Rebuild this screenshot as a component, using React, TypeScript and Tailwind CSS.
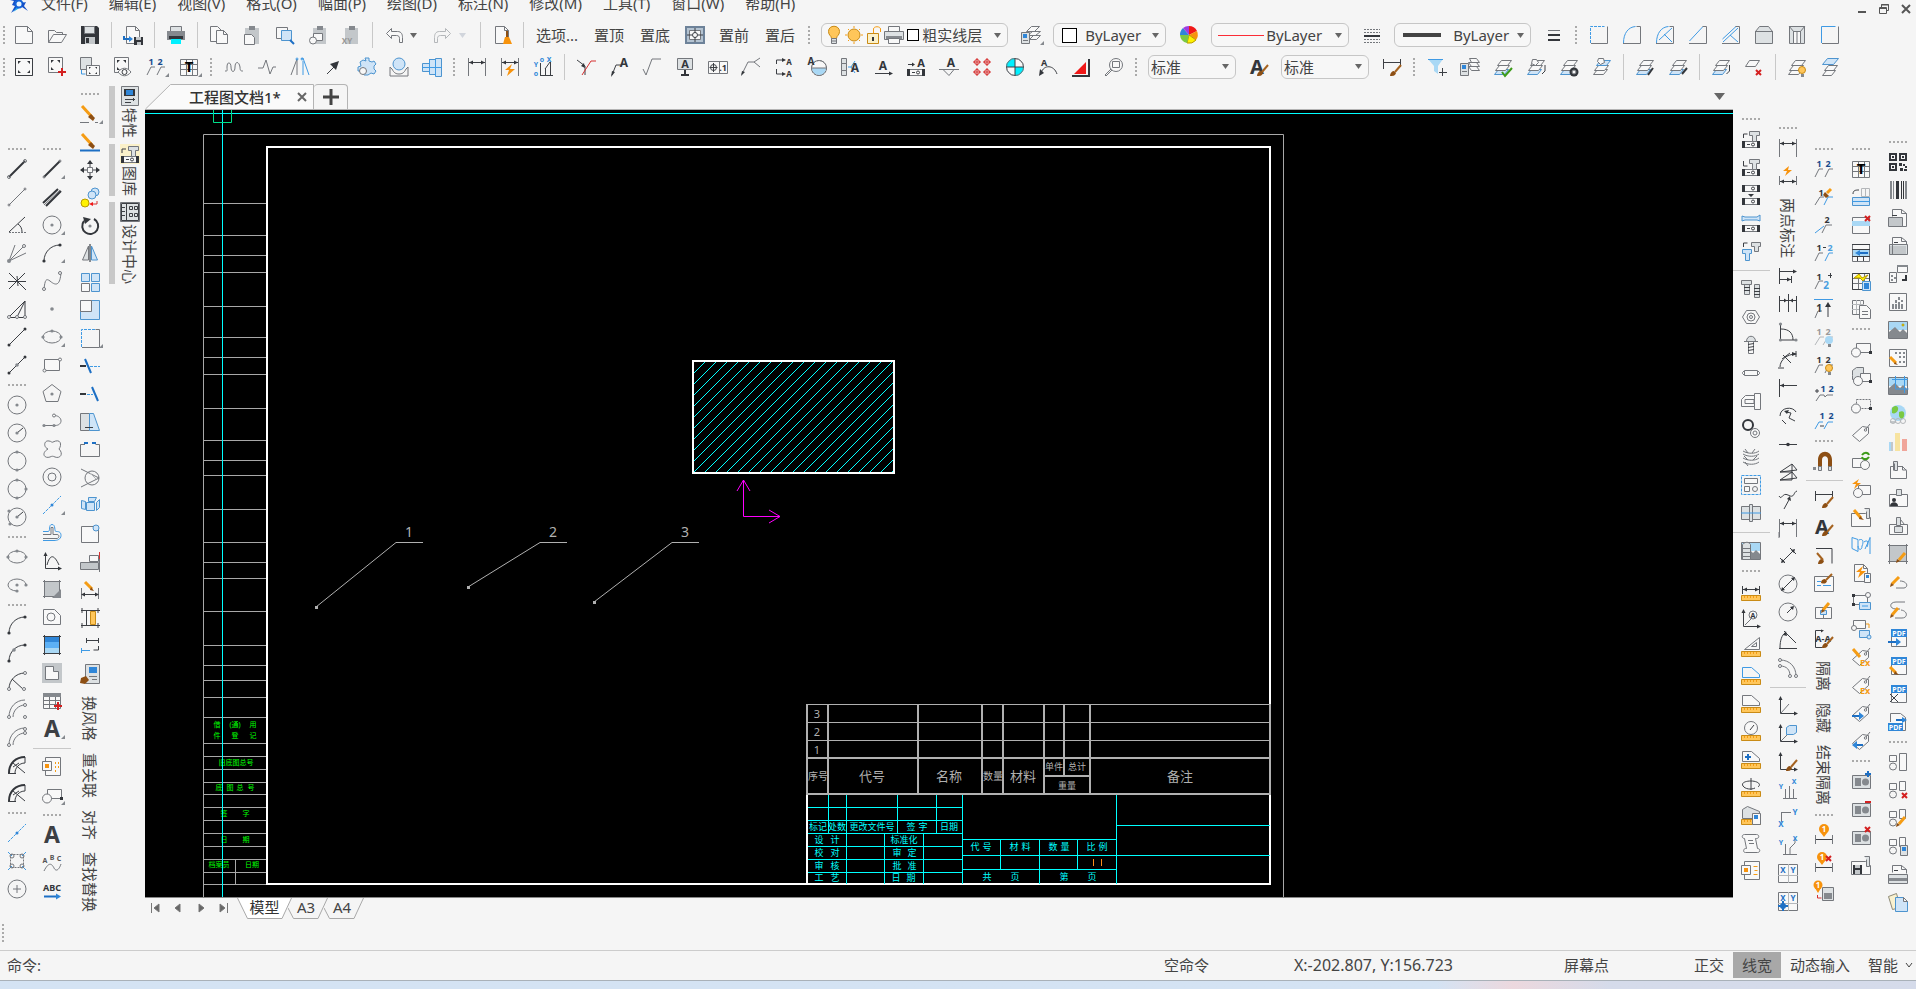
import { Fragment, type ReactNode } from 'react';
import clsx from 'clsx';

/*
 * Toolbar glyphs live on a 20x20 grid. A glyph is a list of layers split by ";":
 *   "<pen> <path data>"               a path
 *   "<pen> o<cx> <cy> <r> ..."        one or more circles
 *   "t <x> <y> <size> <color> <text>" a centred label
 */
type Pen = { stroke?: string; fill?: string; width?: number; dash?: string };

const pens: Record<string, Pen> = {
  g: { stroke: '#74777c' },
  k: { stroke: '#3c3f44' },
  K: { stroke: '#33363b', width: 2 },
  l: { stroke: '#b4b7ba' },
  b: { stroke: '#3f9ae4' },
  V: { stroke: '#1d6fc4', width: 2 },
  r: { stroke: '#d63030' },
  R: { stroke: '#d42020', width: 2 },
  o: { stroke: '#f59c14', width: 3 },
  q: { stroke: '#f59c14' },
  p: { stroke: '#a5621f', width: 2 },
  e: { stroke: '#3c9a18', width: 2 },
  x: { stroke: '#74777c', dash: '2 1' },
  y: { stroke: '#3f9ae4', dash: '3 1' },
  W: { stroke: '#74777c', fill: '#f8f8f8' },
  G: { stroke: '#74777c', fill: '#dde1e3' },
  H: { stroke: '#4d94cf', fill: '#cfe4f7' },
  M: { fill: '#85898e' },
  m: { fill: '#c3c7ca' },
  N: { fill: '#33363b' },
  U: { fill: '#2f86d8' },
  F: { fill: '#f7930d' },
  S: { fill: '#f01818' },
  Y: { stroke: '#c98b16', fill: '#ffc65a' },
  C: { fill: '#00f0ff' },
  c: { fill: '#a9d8f5' },
  P: { fill: '#8d4f14' },
  Q: { stroke: '#b99a00', fill: '#fff200' },
  A: { fill: '#7ac943' },
  v: { fill: '#a03ce0' },
  s: { fill: '#5cb0f5' },
  i: { stroke: '#6d8299', fill: '#b4c3d1', width: 2 },
  // pale fills
  f: { fill: '#f0a59a' },
  j: { fill: '#f7e3a0' },
  J: { fill: '#f9f1cf', stroke: '#8d8a78' },
  z: { fill: '#fbf1c9' },
};

const corner = 'M M23 16v4h-4z';
const sheet = 'W M3.5 1.5h9l4 4v13h-13z;g M12.5 1.5v4h4';
const dim = 'g M1.5 1v18M18.5 1v18;k M2 5.5h16;N M2 5.5l4-2v4zM18 5.5l-4-2v4z';
const brush = 'P M8 19c0-3 2-5 4-5l2 2c-1 3-3 3-6 3z;p M13 15l6-7';
const pencil = 'o M11 16l6-7;P M8 19l1-4 3 2z';
const ruler = 'Y M.5 14.5h19v5h-19z;q M3.5 15v2M6.5 15v2M9.5 15v2M12.5 15v2M15.5 15v2';
const block = 'W M5.5 4.5h14v9h-14z;W o5 13.5 4.5;N M18 12h3v3h-3z';
const tag = 'W M1.5 12.5l10-9 6 1 0 6-9 8z;g o14.5 7 1.2;g M15 6l4-5';
const pdf = 'W M3.5 1.5h15v17h-15z;U M3 1h16v8h-16z;t 11 8 7 #ffffff PDF';
const axes = 'k M2.5 2v15.5h16;N M2.5 0l2 4h-4zM20 17.5l-4 2v-4z';
const num = 'g M1 18l4-8h4M11 18l4-8h4';
const bolt = 'F M12 7l-7 6h4l-2 6 8-7h-5z';
const part = 'W M1.5 12.5h17v6h-17z;N M1 12h3v7h-3zM16 12h3v7h-3z;k o12 15.5 1.5;k M6 15.5h3';
const hammer = 'G M8.5 2.5h10v4h-3v6h-4v-6h-3z';
const screw = 'G M5.5 6.5c0-7 9-7 9 0z;W M7.5 6.5h5v12h-5z;g M3 6.5h14;k M7 9.5l6-1M7 12.5l6-1M7 15.5l6-1';
const bulb = 'Y o15 13 3.5;M M14 17h3v3h-3z';
const cells = 'W M1.5 2.5h17v16h-17z;g M1 7.5h18M1 12.5h18M7.5 2v16M13.5 2v16';
const photo = 'W M.5 1.5h19v17h-19z;c M1 2h18v8h-18z;M M1 12l6-5 5 5 3-3 4 4v5h-18z';
const card = 'W M1.5 3.5h7v6h-7zM11.5 1.5h7v17h-7z;g o5 14.5 3.5';
const cardShort = 'W M1.5 3.5h7v6h-7zM11.5 1.5h6v9h-6z;g o5 14.5 3.5';
const scene = 'G M1.5 4.5h18v13h-18z;M M4 7h6v8h-6z;M o14.5 11 3.5';
const box = 'W M2.5 6.5h12l4 4v8h-16z;g M14.5 6v4h4';
const xy = 'W M.5 .5h19v18h-19z;l M10.5 0v19M0 11.5h20;t 5 9 8 #1d6fc4 X;t 15 9 8 #1d6fc4 Y';

const layers = (top: string, mid: string, low: string) =>
  `${low} M5.5 12.5h10l-4 5h-10z;${mid} M6.5 8.5h10l-4 5h-10z;${top} M8.5 3.5h10l-4 5h-10z`;

const glyphs: Record<string, string> = {
  // standard bar
  new: 'W M1.5 1.5h12l5 5v12h-17z;g M13.5 1.5v5h5',
  open: 'g M1.5 17.5v-12h6l2 2h6v3;W M1.5 17.5l5-8h13l-5 8z',
  save: 'N M1 1h16l2 2v16h-18z;G M4.5 1.5h10v7h-10z;m M5 12h10v7h-10z;N M6 13h3v5h-3z',
  saveAs: `${sheet};V M1 11v3h6;U M6 11l4 3-4 3z;N M11 12h9v8h-9z;m M13 12h5v3h-5zM14 17h4v3h-4z`,
  print: 'G M4.5 1.5h11v6h-11z;M M1 6h18v9h-18z;N M3 11h14v3h-14z;C M5 14h10v5h-10z',
  copy: 'W M1.5 1.5h7l4 4v11h-11z;W M7.5 5.5h7l4 4v9h-11z;g M14.5 5.5v4h4',
  paste: 'm M3 3h14v16h-14z;M M7 1h6v4h-6z;W M2.5 9.5h7l3 3v7h-10z',
  pasteZoom: 'W M1.5 2.5h11v11h-11z;H M6.5 5.5h10v10h-10z;V M15 15l4 4',
  pasteBlock: 'm M5 3h13v16h-13z;M M9 1h6v4h-6z;W M5.5 8.5h9v7h-9z;W o5 15.5 3.5',
  pasteXY: 'm M4 3h13v16h-13z;M M8 1h6v4h-6z;t 6 19 8 #999999 XY',
  undo: 'W M2.5 8.5l5-5v3h6c4 0 5 3 5 6v5h-3v-4c0-2-1-3-3-3h-5v3z',
  redo: 'l M17.5 8.5l-5-5v3h-6c-4 0-5 3-5 6v5h3v-4c0-2 1-3 3-3h5v3z',
  clean: `${sheet};P M14 6h2v7h-2z;F M13 12h4l3 7h-9z`,
  front: 'i M1 2h18v16h-18z;W M4.5 5.5h11v9h-11z;k o10 10 2.5;k M10 3v5M10 12v5M2 10h5M13 10h5',
  layerMgr: `W M10.5 1.5h8l-5 5h-8zM11.5 6.5h8l-5 4h-8zM12.5 10.5h7l-4 4h-7z;G M.5 7.5h8v11h-8z;U M2 9h4v4h-4z;g M2 15.5h5;${corner}`,
  wheel: 'S M10 10L10 1A9 9 0 0 1 18 6z;F M10 10L18 6A9 9 0 0 1 17 15z;Q M10 10L17 15A9 9 0 0 1 8 18z;A M10 10L8 18A9 9 0 0 1 1 10z;U M10 10L1 10A9 9 0 0 1 4 3z;v M10 10L4 3A9 9 0 0 1 10 1z',
  linetype: 'x M2 4.5h16M2 7.5h16;K M2 11h16;x M2 14.5h16M2 17.5h16',
  lineweight: 'g M4 5.5h12;K M4 10h12;K M4 15h12',
  cnrBox: 'y M1.5 18v-16.5h14;g M2 18.5h16.5v-17',
  cnrArc: 'b M1.5 18c0-10 5-16 12-16.5;g M1 18.5h17.5v-17h-4',
  cnrArcX: 'b M1.5 18c0-10 5-16 12-16.5M4 15l13-12M9 9l8 8;g M1 18.5h17.5v-17h-4',
  chamfer: 'b M1.5 16L15 1.5;g M1 18.5h17.5v-17h-4',
  chamferX: 'b M1.5 14L15 1.5M2 17L17 3M9 10l8 7;g M1 18.5h17.5v-17h-4',
  shaft: 'G M1.5 6.5l4-5h9l4 5v12h-17z;g M1 6.5h18',
  hole: 'G M2.5 1.5h15v17h-15z;W M6.5 6.5h7v12h-7z;g M2 1l5 6M18 1l-5 6M10 7v11',
  cnrLine: 'b M1.5 18v-16.5h14;g M2 18.5h16.5v-17',

  // drawing bar
  frame: 'W M1.5 1.5h17v17h-17z;k M1.5 1.5h17v17h-17z;N M4 4h3l-3 3zM16 4v3l-3-3zM4 16v-3l3 3zM16 16h-3l3-3z',
  frameAdd: 'W M1.5 .5h14v15h-14z;N M4 3h3l-3 3zM13 3v3l-3-3zM4 13v-3l3 3z;R M15 11v8M11 15h8',
  frameSwap: 'G M.5 .5h11v12h-11z;W M6.5 8.5h13v10h-13z;N M9 10h2l-2 2zM17 10v2l-2-2zM9 17v-2l2 2zM17 17h-2l2-2z;b M1.5 13v4h4',
  frameView: 'W M1.5 .5h14v15h-14z;N M4 3h3l-3 3zM13 3v3l-3-3zM4 13v-3l3 3z;W M5 15c4-5 9-5 13 0-4 5-9 5-13 0z;k o11.5 15 2.5',
  num: `${num};t 5 8 9 #174a8c 1;t 14 8 9 #174a8c 2;${corner}`,
  tableT: `${cells};t 10 15 15 #000000 T;${corner}`,
  wave: 'g M1 14c3 0 2 0 2-4 0-6 4-5 4 0 0 6 4 6 4 0 0-6 4-6 5 0 0 4 1 4 3 4',
  zigzag: 'g M1 11h5l3-8 4 14 3-7h3',
  gable: 'g M1 18L7 2v16;b M11 2l2-1 6 17M13 4v14;b o7 2 1 12 2 1',
  arrow: 'k M4 17l8-8;N M16 4l-3 9-6-6z',
  gear: 'H M9 1h4v3l3 1 2-1 2 3-2 2v3l2 2-2 3-3-1-3 2h-4l-1-3-3-1-2 0v-4l3-1-1-4 3-2 3 1z;W o7 14 3.5',
  cam: 'H o10 7 6;g M1 10v9h18v-9l-2 2c-2 4-4 5-7 5s-5-1-7-5z',
  coupling: 'H M.5 6.5h7v-4h6v-1h6v18h-6v-2h-6v-3h-7z;b M0 10.5h20M7.5 2v15M13.5 2v17',
  dim,
  dimFast: `${dim};${bolt}`,
  coord: 'k M7.5 6v12M7 18.5h13M12.5 18v-7M17.5 18v-13M12 12l5-7;t 3 10 7 #2f86d8 Y;t 16 5 7 #2f86d8 X;t 3 19 7 #2f86d8 o;t 9 5 7 #2f86d8 o',
  leaderR: 'k M1 3l8 6M9 18V9;r M6 18l9-14h5;N M9 11l-4-2 3-3z',
  leaderA: 'k M3 18l4-10h5;N M2 20l1-6 3 1z;t 15 10 12 #33363b A',
  rough: 'g M1 12l3 6 6-16h9',
  datum: 'G M2.5 1.5h15v11h-15z;N M9 13h2v4h-2zM6 17h8v2h-8z;t 10 11 11 #33363b A',
  tol: 'W M.5 4.5h19v12h-19z;g M11.5 4v12;k o5.5 10.5 3;k M1.5 10.5h8M5.5 6v9;t 15 14 9 #33363b .1',
  weld: 'g M1 17l6-12h6l6-4M13 5l6 5;N M0 19l1-5 3 1z',
  section: 'k M2.5 7v-4h8M2.5 12v5h8;N M12 3l-4-2v4zM12 17l-4-2v4z;t 15 8 8 #33363b A;t 15 20 8 #33363b A',
  viewDir: 'W o12 11 7.500;c M5 11h14c0 4-3 7-7 7s-7-3-7-7z;g M5 11h14;x o12 11 7.500;t 4 8 10 #33363b A',
  cutView: 'G M1.5 1.5h5v5h-5zM1.5 13.5h5v5h-5zM1.5 6.5h5v7h-5z;b M8 10h3l4-6M11 10l4 6;t 15 15 12 #33363b A',
  textLine: 'k M2 16.5h15;N M20 16.5l-4-2v4z;t 10 13 12 #33363b A',
  textPart: `${part};k M2 7.5h5;N M9 7.5l-3-2v4z;t 15 10 11 #33363b A`,
  textTri: 'g M0 12.5h20M4 12.5l6 6 5-6;t 12 10 12 #33363b A',
  targets: 'r o5 5 2.5 15 5 2.5 5 15 2.5 15 15 2.5;r M5 1v8M1 5h8M15 1v8M11 5h8M5 11v8M1 15h8M15 11v8M11 15h8',
  quad: 'W o10 10 8.500;C M10 10V1A9 9 0 0 0 1 10zM10 10v9a9 9 0 0 0 9-9z;g o10 10 8.500;k M10 1v18M1 10h18',
  textArc: 'k M3 16c3-9 13-8 16 1;N M1 19l1-7 4 4z;t 6 9 9 #33363b A',
  slope: 'S M3 17L15 5v12z;K M1 19h17V2',
  zoom: 'W o12 8 6.5;W M8.5 4.5h7v6h-7z;g M7 12l-6 6 1 1 6-6',
  styleA: `t 8 17 20 #33363b A;${brush}`,
  dimBrush: `k M1.5 2v10M18.5 2v8M2 5.5h16;${brush}`,
  filter: 'c M1 2h15l-5 7v8l-4-3V9z;b M1 2.5h15;k M15.5 11v8M12 15.5h8',
  layProp: 'W M9.5 1.5h7l3 4h-8zM8.5 5.5h8l3 4h-8zM8.5 9.5h8l3 4h-8z;G M.5 6.5h8v12h-8z;U M2 8h4v4h-4z;g M2 14.5h5',
  layOk: `${layers('W', 'W', 'H')};e M9 15l3 4 7-8`,
  layPick: `${layers('W', 'W', 'H')};W M6.5 2.5h4l2 3-3 3-4-2z;k M19 8v6l-3 3`,
  layGear: `${layers('W', 'W', 'H')};N o15 15 4.5;W o15 15 2`,
  layTop: `${layers('H', 'W', 'W')};W M6.5 1.5h5l1 4-4 2-3-3z`,
  layDown: `${layers('W', 'W', 'H')};K M18 11l-5 7`,
  layUp: `${layers('W', 'W', 'H')};K M14 17l5-6`,
  layMove: `${layers('W', 'W', 'H')};k M18.5 8v6l-3 3`,
  layDel: 'W M5.5 3.5h10l-4 6h-10z;R M12 13l5 5M17 13l-5 5',
  layBulb: `${layers('W', 'W', 'W')};${bulb}`,
  laySplit: 'H M7.5 1.5h11l-5 6h-11z;W M8.5 8.5h9l-4 5h-9zM6.500 13.5h9l-4 5h-9z',

  // lines and circles
  ln: 'K M2 18L18 2;g o2 18 1.5 18 2 1.5',
  lnThin: 'g M2 18L18 2;g o2 18 1 18 2 1',
  lnAng: 'k M2 17L18 2;x M2 17.5h17;k M11 9c3 2 4 5 4 8',
  lnFan: 'g M2 18L8 2M2 18L17 3M2 18l17-8;W o17 3 1.5;M o2 18 2',
  lnCross: 'k M2 2l17 17M2 18L18 2M1 10.5h18M10 5l1 10',
  lnTri: 'k M1 18.5h18M2 18L18 2v16M10 18l8-16;W o2 18 1.5 10 18 1.5 18 18 1.5',
  lnEnd: 'k M2 18L18 2;N o2 18 1.5 18 2 1.5',
  lnMid: 'k M2 18L18 2;N o2 18 1.5 18 2 1.5;M o10 10 1.8',
  cCtr: 'g o10 10 9;M o10 10 1.6',
  cRad: 'g o10 10 9;k M10 10l6-5;M o10 10 1.6',
  c2p: 'g o10 10 9;M o10 1 1.6 10 19 1.6',
  c3p: 'g o10 10 9;M o10 1 1.6 10 19 1.6 19 10 1.6',
  cTan: 'g o10 10 9;k M10 10l6-5;M o10 10 1.6 2 4 1.6 3 17 1.6',
  elli: 'g M1 10a9 6 0 0 1 18 0a9 6 0 0 1-18 0z;M o10 4 1.6 19 10 1.6 1 10 1.6',
  elliArc: 'g M10 16a9 6 0 1 1 9-6;M o10 10 1.6 19 10 1.6 10 16 1.6',
  arc1: 'k M2 18C2 9 9 2 18 2;N o2 18 1.6 18 2 1.6',
  arc2: 'k M2 18C2 9 9 2 18 2;N o2 18 1.6 18 2 1.6;M o7 7 1.8',
  arc3: 'k M2 18C2 9 9 2 18 2M5 8l12 11;W o2 18 1.5 18 2 1.5 17 18 1.5',
  arc4: 'g M2 18C2 8 9 1 18 1M6 18c0-7 6-12 12-12;W o2 18 1.5 18 6 1.5 18 18 1.5',
  arc5: 'g M2 18C2 8 9 1 18 1M6 18c0-7 6-12 12-12;W o2 18 1.5 18 6 1.5 18 2 1.5',
  arc6: 'K M2 18C2 8 9 2 18 2;k M8 18c0-5 4-10 10-10M1 18.5h8M6 8l12 10M18 2v6M6 12l6-4',
  center: 'y M1 19L19 1;U o10 10 1.5',
  nodes: 'x M3.5 3.5h13v13h-13z;b M1 1l4 4M19 1l-4 4M1 19l4-4M19 19l-4-4;g o5 5 2 15 5 2 5 15 2 15 15 2',
  plusC: 'g o10 10 9;g M6 10h8M10 6v8',

  // draw
  line: `K M2 18L18 2;g o2 18 1 18 2 1;${corner}`,
  dbl: 'K M1 16L16 2M4 19L19 4;g M2 18L18 3',
  circle: `g o10 10 9;M o10 10 1.6;${corner}`,
  arc: `k M2 18C2 9 9 2 18 2;N o2 18 1.6 18 2 1.6;${corner}`,
  spline: 'g M2 18c1-9 2-11 6-8 7 6 10 3 11-8;W o2 18 1.5 18 2 1.5',
  point: 'M o10 10 1.8',
  ellipse: `g M1 10a9 6 0 0 1 18 0a9 6 0 0 1-18 0z;M o10 4 1.6 19 10 1.6 1 10 1.6;${corner}`,
  rect: 'W M2.5 4.5h15v11h-15z;W o2.5 15.5 1.5 18 4.5 1.5',
  penta: 'g M10 1.5l9 7-3 10h-12l-3-10z;M o10 11 1.6',
  pline: 'g M2 14.5h11c8 0 8-9 0-10;M o2 14.5 1.6 12 14.5 1.6;W o12 4.5 1.5',
  cloud: 'g M6 10C1 8 2 1 7 2c2 0 3 2 4 1 8-4 9 3 6 7 5 5 1 10-4 8-2-1-3-1-5 0-6 2-9-4-2-8z',
  donut: 'g o10 10 9;g o10 10 4',
  axis: `y M1 19L19 1;U o10 10 1.5;${corner}`,
  contour: 'b M1 8.5h5c3 0 0-7 4-7s2 7 4 7 5 0 5 4-4 5-7 5h-11;g M1 11.5h8v-7h2v7h4c3 0 2 4 0 4H1',
  curve: 'k M3.5 2v15.5h15M5 14c3-11 7-11 12 0;N M3.5 1l2 4h-4zM20 17.5l-4 2v-4z',
  hatch: 'm M2 2h16v16h-16z;g M1 2.5h18M1 17.5h18M2.5 1v18M17.5 1v18;M M19 10v9h-9z',
  region: 'W M1.5 2.5h11l6 6v9h-17z;g o9 10 4',
  grad: 'U M2 2h16v5h-16z;s M2 7h16v6h-16z;c M2 13h16v5h-16z;k M1 1.5h18M1 18.5h18M2.5 0v20M17.5 0v20',
  lshape: 'm M0 0h20v20h-20z;W M3.5 3.5h8v5h5v8h-13z',
  table: 'W M1.5 2.5h17v15h-17z;M M1 2h18v4h-18z;g M1 9.5h18M1 13.5h18M7.5 6v11M13.5 6v11;R M16 11v8M12 15h8',
  text: `t 10 18 23 #3c3f44 A;${corner}`,
  insPic: 'W M3.5 .5h15v18h-15z;W M.5 4.5h9v9h-9z;F M3 7h4v4h-4z;q M13.5 5v2M13.5 9v2M13.5 13v2M16.5 5v2M16.5 9v2',
  blockIns: `${block};${corner}`,
  textA: 't 10 18 23 #3c3f44 A',
  abcArc: 't 3 10 7 #555555 A;t 10 7 7 #555555 B;t 17 8 7 #555555 C;g M2 18c5-10 8-7 10-3s5 2 7-4',
  abcLine: 't 10 10 9 #33363b ABC;V M2 15.5h14;U M19 15.5l-5-3v6z',

  // modify
  erase: `g M0 18.5h9M15 18.5h3;o M2 2l10 11;P M11 10l4 4-2 3-5-4z;${corner}`,
  eraseAll: 'V M0 18.5h20;o M2 2l10 11;P M11 10l4 4-2 3-5-4z',
  move: 'k M10 1v18M1 10h18;N M10 0l3 4h-6zM10 20l3-4h-6zM0 10l4-3v6zM20 10l-4-3v6z;W M7.5 7.5h5v5h-5z',
  copyObj: 'H o15 4 4;H o12 7 4;Q o5 15 4;r M11 16h6v-3;S M9 16l4-2v4z',
  rotate: 'K M4 5a8 8 0 1 0 10-2;N M3 1l8 2-6 5z;M o10 10 1.6',
  mirror: 'G M8.5 2v14h-6z;M M9 0h2v18h-2z;H M11.5 2v14h6z',
  array: 'H M1.5 1.5h8v8h-8zM11.5 1.5h8v8h-8zM11.5 11.5h8v8h-8z;W M1.5 11.5h8v8h-8z',
  scale: 'H M.5 .5h19v19h-19z;W M.5 .5h11v11h-11z',
  stretch: `y M1.5 19v-17.5h14;g M2 19.5h17.5v-18h-4;${corner}`,
  trim: 'K M0 10h6;y M10 10.5h10;V M5 3l6 14',
  extend: 'K M0 10h6;y M7 10.5h6;V M12 3l6 14',
  draft: 'G M.5 1.5h9v17h-9z;H M9.5 1.5h4l6 17h-10z;k M5 15.5h8',
  break: 'g M5 4.5h-4.5v12h19v-12h-4;V M4 3h4M12 3h4',
  cone: 'g o12 10 7;g M1 1l18 9-18 9;l M9 4l7 7',
  explode: 'H M6.5 6.5h8v8h-8zM1.5 4.5l4 1v8l-4-1zM8.5 1.5h8l-2 4h-6zM16.5 6.5l3-3v8l-3 3z',
  node: 'W M1.5 2.5h17v16h-17z;H o16 4 3',
  align: 'm M1 11h17v7h-17z;g M.5 10.5h18v7h-18z;W M9.5 3.5h9v6h-9z;r M19.5 0v7;g M19.5 7v13',
  dimEdit: 'g M1.5 8v11M18.5 8v11;k M2 14.5h16;N M1 14.5l4-2v4zM19 14.5l-4-2v4z;o M5 2l7 7;P M11 7l3 4-4-1z',
  dimRuler: 'k M1 2.5h19M1 17.5h19M6.5 3v14;Y M10.5 3.5h5v13h-5z;k M2 0v5M18 0v5M2 15v5M18 15v5',
  dimBreak: 'k M7 4.5h12M6.5 2v5M18.5 2v5M18.5 10v4h-5;b M1 14.5h9M1.5 12v5',
  propBrush: 'G M5.5 .5h14v19h-14z;U M9 3h8v6h-8z;g M9 12.5h8M12 15.5h5;P M1 14l5-2 3 4-4 4-5-1z',

  // library
  part1: `${part};${hammer};k M2.5 9v-4h4`,
  part2: `${part};${hammer};k M2.5 4v5h4`,
  part3: 'W M1.5 .5h17v6h-17z;k o12 3.5 1.5;N M1 0h3v7h-3zM16 0h3v7h-3z;W M1.5 13.5h17v6h-17z;k o12 16.5 1.5;N M1 13h3v7h-3zM16 13h3v7h-3zM10 12l-3-3h6z',
  part4: `${part};H M1 3l3 1h12l3-2v6l-3-1h-12l-3 1z`,
  part5: 'G M10.5 1.5h9v4h-2v5h-4v-5h-3z;H M1.5 8.5h9v4h-2v7h-4v-7h-3z;k M2.5 6v-4h4',
  bolts: 'G M.5 1.5h10v4h-10zM3.5 5.5h5v10h-5zM13.5 5.5h5v13h-5z;k M3 8.5h6M3 11.5h6M13 9.5h6M13 12.5h6M13 15.5h6',
  nut: 'W M5.500 3.500h9l4 6.500-4 6.500h-9l-4-6.500z;g o10 10 4 10 10 1.5',
  screw,
  pin: 'W M3.5 7.5h13l2 2v1l-2 2h-13l-2-2v-1z;g M3.5 8v4M16.5 8v4',
  bushing: 'W M13.5 2.5h6v16h-6z;W M.5 8.5l4-4h9v11h-13z;g M4 8.5h9v4h-9z',
  rings: 'K o7 6 5;W o14 14 4.5;g o14 14 2',
  spring: 'g M2 4c5 3 12 3 16 0M2 7c5 3 12 3 16 0M2 11c5 3 12 3 16 0M2 15c5 3 12 3 16 0M4 2l3 4M14 2l-3 4M3 9l4 4M16 9l-4 4M4 15l3 4',
  structure: 'y M.5 .5h19v19h-19z;W M3.5 3.5h13v5h-13zM3.5 11.5h5v5h-5z;g o14 14 2.5',
  tube: 'G M.5 3.5h8v13h-8zM8.5 1.5h3v17h-3zM11.5 3.5h8v13h-8z;b M0 10h20',
  mural: `${photo};G M1.5 3.5c3-3 6-3 8 0v15h-8z;g M1 7.5h9M1 11.5h9M1 15.5h9`,
  mDist: `k M1.5 5v8M18.5 5v8M2 8.5h16;N M2 8.5l4-2v4zM18 8.5l-4-2v4z;${ruler}`,
  mCoord: `${axes};g M4 16l8-8;W o12 6 4;t 12 9 7 #33363b A`,
  mTri: `${ruler};W M3.5 12.5l15-12v12z;g M10.5 9.5l5-4v4z`,
  mArea: `${ruler};b M1.5 12.5v-10h9l8 7v3z`,
  mPoly: `${ruler};W M1.5 12.5v-10h9l8 7v3z`,
  mCircle: `${ruler};W o10 7 6.5;k M9 9l4-5`,
  mAdd: `${ruler};W M1.5 12.5v-10h9l8 7v3z;V M7 5v6M4 8h6`,
  mLoop: `${ruler};k M10 1v12M17 10c4-3-1-6-7-6s-10 2-8 5 8 4 12 2`,
  mSheet: `${ruler};G M1.5 13.5v-9l5-3 12 5v7z;W M11.5 8.5h8v11h-8z;U M13 10h4v4h-4z`,
  scroll: 'W M3.5 1.5h12c3 0 3 4 0 4h-1l2 10c3 0 3 4 0 4h-12c-3 0-2-4 0-4h1l-2-10c-3 0-3-4 0-4z;g M7 7.5h5M8 10.5h5',
  report: 'W M3.5 .5h15v18h-15z;W M.5 4.5h9v9h-9z;F M3 7h4v4h-4z;q M12.5 5.5h4M13.5 9.5h3M12.5 13.5h4',

  // dimension
  dimAuto: 'g M1.5 10v9M18.5 10v9;k M2 15.5h16;N M2 15.5l4-2v4zM18 15.5l-4-2v4z;F M11 0l-6 5h4l-2 5 7-6h-4z',
  dimBase: 'k M1.5 2v16M2 5.5h16M2 13.5h11M13.5 10v7;N M19 5.5l-4-2v4zM13 13.5l-4-2v4z',
  dimCont: 'k M1.5 2v16M18.5 2v16M10.5 0v18M2 6.5h16;N M9 6.5l-3-2v4zM12 6.5l3-2v4z',
  dimAngle: 'k M2.5 2v16h16M3 7c8 0 12 4 12 11;M o2.5 2 1.6 2.5 18 1.6 18 18 1.6',
  dimArc: 'k M2 17c0-7 7-13 16-13M5 5l8 8M4 9l8-6M18 1v6M0 18h6;N M19 4l-5-2v4z',
  dimOrd: 'k M1.5 1v18M2 7.5h17;N M2 7.5l4-2v4z',
  dimJog: 'k M2 10c0-9 13-10 16-4M17 15l-6-3 2-5-5-1M4 14l4 4;N M6 5l5-1-2 4z',
  dimDot: 'k M1 10.5h18;N o10 10.5 1.8',
  dimTaper: 'k M2 10L14 2v8zM2 18l12-8v8zM2 10l17-2-5-6M2 18l17-2-5-6',
  dimSpline: 'k M1 6c3 5 3-4 9-1 7 4 5-3 9-4M12 8L6 19;N M12 6l1 5-4-2z',
  dimLin: `${dim};g M1 14v6`,
  dimAli: 'k M5 15L15 5M2 12l5 5M12 2l6 6;N M3 17l1-4 3 3zM17 3l-4 1 3 3z',
  dimDia: 'g o10 10 9;k M5 15L15 5;N M3 17l1-4 3 3zM17 3l-4 1 3 3z',
  dimRad: 'g o10 10 9;k M9 11l6-6;N M16 4l-4 1 3 3z',
  dimAng2: 'k M1 18.5h18M6 1l12 12M2 18C2 10 4 5 7 3;N M8 1l-3 4 4 1z',
  dimArc2: 'g M2 2C12 2 18 9 18 18M2 8c7 0 10 4 10 10;W o2 2 1.5 18 18 1.5 2 8 1.5 12 18 1.5',
  axOrigin: `${axes};g M3 17l8-9`,
  axCube: `${axes};g M3 17l6-6;H M8.5 3.5l3-2h7v7l-3 2h-7z`,
  axPencil: `${axes};${brush}`,
  ordX: 'g M5 18.5h14M7.5 9v9M11.5 6v12M15.5 9v9;t 3 9 7 #2f86d8 Y;t 16 4 7 #2f86d8 X',
  ordY: 'g M3.5 4v10M3 4.5h10;t 3 19 8 #2f86d8 X;t 17 7 8 #2f86d8 Y',
  ordXY: 'g M5 18.5h14M7.5 8v10M12 18V12l5-5V2;t 3 9 7 #2f86d8 Y;t 17 5 7 #2f86d8 X',
  xy,
  xyTarget: `${xy};V o5 14 2;V M5 9v10M0 14h10`,

  // numbering
  bal12: `${num};t 5 8 9 #174a8c 1;t 14 8 9 #174a8c 2`,
  balErase: 'g M1 18l5-8h4;b M10 18l4-8h5;t 7 9 9 #33363b 1;o M13 6l4-4;P M11 5l4 4-3 2-3-3z',
  bal2: 'b M1 18l9-7;g M8 18l4-8h6;t 13 8 9 #33363b 2',
  balSwap: 'g M1 18l4-8h4;b M11 18l4-8h4;t 5 8 9 #33363b 1;t 16 8 9 #4aa0e0 2;k M9 4.5h3',
  balAdd: 'g M1 18l4-8h4;t 5 9 9 #33363b 1;t 12 18 10 #4aa0e0 2;k M14 4.5h4M16.5 2v5',
  balUp: 'b M0 .5h19;g M1 19l3-7h4;t 5 13 10 #33363b 1;k M14 6v12;N M14 3l3 5h-6z',
  balOff: 'l M1 18l5-8h4M9 18l5-8h5;t 5 8 9 #999999 1;t 14 8 9 #999999 2;c o15 13 4;M M14 17h3v3h-3z',
  balOn: `${num};t 5 8 9 #33363b 1;t 14 8 9 #33363b 2;${bulb}`,
  balPlus: 'k M1 8h4M3 6v4;g M2 18l4-6h4l1 2 2-2h6;t 9 9 9 #174a8c 1;t 17 9 9 #174a8c 2',
  balLink: 'b M1 18l4-7h4M10 18l4-7h5;k M6 15h4;t 8 8 9 #174a8c 1;t 17 8 9 #174a8c 2',
  magnet: 'P M4 16v-7c0-11 14-11 14 0v7h-4v-7c0-5-6-5-6 0v7z;G M4.5 15.5h3v4h-3zM14.5 15.5h3v4h-3z;M M-1 16h3v3h-3z',
  leadBrush: 'k M2 3.5h16v15;P M4 19c0-3 2-5 4-5l2 2c-1 3-3 3-6 3z;p M9 15l-6-7',
  tblBrush: 'W M.5 3.5h19v15h-19z;b M3 8.5h4M3 12.5h4M9 12.5h8;P M7 10c0-3 2-4 4-4l2 2c-1 3-3 3-6 2z;p M12 7l6-6',
  bookEdit: 'W M1.5 6.5h8v11h-8zM9.5 6.5h8v11h-8z;H M6.5 9.5h6v4h-6z;o M9 9l6-7;P M7 12l1-4 3 2z',
  aaBrush: `k M8 1.5H1.5v17h7;N M10 1.5l-3-1v3z;t 9 13 9 #33363b A-A;${brush}`,
  pinDim: 'g M1.5 10v9M18.5 10v9;k M2 14.5h16;F o10 4 5;F M7 8h6l-3 4z;t 10 7 8 #ffffff 1',
  pinDimX: 'g M1.5 10v9M18.5 10v9;k M2 14.5h16;F o8 4 5;F M5 8h6l-3 4z;t 8 7 8 #ffffff 1;R M12 3l5 5M17 3l-5 5',
  pinCalc: 'G M8.5 6.5h11v13h-11z;M M10 12h8v6h-8z;F o4 4 4.5;F M1 7h6l-3 5z;t 4 7 8 #ffffff 1;r M3.5 14v3h4',

  // tables and blocks
  tText: `${cells};t 10 15 15 #000000 T`,
  tRow: 'l M10.5 1.5h8v8h-8zM14.5 1v8;k M2 7c0-4 3-4 6-4;H M1.5 10.5h17v8h-17z;b M1 14.5h18',
  tDel: 'W M1.5 2.5h17v16h-17z;c M1 6h18v5h-18z;R M14 1l5 5M19 1l-5 5',
  tMerge: 'W M1.5 1.5h17v17h-17z;k M1 1.5h18M1 6.5h18M1 13.5h18M6.5 13v5M12.5 13v5;c M2 7h16v6h-16z;V M17 10h-9;U M4 10l5-3v6z',
  tCalc: `${cells};k M1.5 2.5h17v16h-17z;Q M3 7l5-4 3 4 6-3-5 6-3-3z;H M11.5 10.5h8v9h-8z;U M13 12h5v6h-5z`,
  tSheet: 'W M1.5 1.5h11v14h-11z;l M5.5 1v14M9.5 1v14M1 5.5h12M1 10.5h12;W M8.5 6.5h7l4 4v9h-11z;g M11 12.5h6M11 15.5h6',
  blk: block,
  blkCopy: 'G M1.5 8.5v-5l4-3h7v12h-11z;W M9.5 6.5h10v8h-10z;W o7 14 4.5;N M18 13h3v3h-3z',
  blkDash: 'x M5.5 4.5h14v9h-14z;W o5 13.5 4.5;N M18 12h3v3h-3z',
  tag,
  blkSync: 'W M1.5 7.5h14v9h-14z;W o14 14 4.5;e M11 4c2-3 6-3 7 0M18 6c-2 3-6 3-7 0',
  blkFast: 'W M7.5 6.5h12v9h-12z;W o7 14 4.5;F M8 0L1 5h4l-2 5 7-6h-4z',
  blkClip: 'W M.5 6.5h14l5 4v9h-19z;G M13.5 1.5h5v10h-3v-7;o M3 3l7 8;P M9 9l4 4-5-1z',
  wrap: 'b M1 2.5l6 2v12l-6-3zM8 5c4-2 5 2 3 6 0 5-4 4-4 0M13 7c4-3 5 1 3 5M19 2v17M14 14l5-11',
  sheetFast: `${sheet};F M12 3l-7 6h4l-2 6 8-7h-5z;W M13.5 10.5h6v9h-6z;U M15 12h3v3h-3z`,
  attrIns: 'W M2.5 4.5h14v9h-14z;W o17 4 2.5;N M1 3h3v3h-3zM1 12h3v3h-3z;H M8.5 11.5h11v7h-11z;b M11 15h6',
  attrMove: 'W M2.5 1.5h12v8h-12z;W o3 9 2.5;H M8.5 11.5h10v7h-10z;H o18 18 2;q M15 5h3v4',
  tagEdit: `${tag};o M2 2l7 8;t 14 19 9 #f59c14 Ex`,
  tagEx: `${tag};t 14 19 9 #f59c14 Ex`,
  tagOut: `${tag};V M1 13h8;U M13 13l-5-4v8z`,
  tagIn: `${tag};V M12 14h-7;U M1 14l5-4v8z`,
  scAdd: `${scene};V M17 0v6M14 3h6`,
  scSub: `${scene};R M14 3h6`,
  scDel: `${scene};R M14 0l5 5M19 0l-5 5`,
  scSave: 'W M.5 6.5h14l5 4v9h-19z;G M13.5 1.5h5v10h-3v-7;N M2 10h9v9h-9z;m M4 10h5v3h-5zM4 15h5v4h-5z',

  // files and pictures
  qr: 'K M2 2h6v6h-6zM12 2h6v6h-6zM2 12h6v6h-6z;N M4 4h2v2h-2zM14 4h2v2h-2zM4 14h2v2h-2zM11 11h3v3h-3zM15 12h2v2h-2zM17 14h2v2h-2zM12 16h3v3h-3zM16 17h3v2h-3z',
  barcode: 'M M2 1h2v18h-2zM5 1h1v18h-1zM17 1h2v18h-2z;N M8 1h3v18h-3zM13 1h1v18h-1zM15 1h1v18h-1z',
  fileIn: 'W M4.5 8.5v-7h9l5 4v13h-5;g M13.5 1.5v4h5;G M.5 9.5h14v9h-14z;m M1 10h13v8h-13z;k M4 7.5h5',
  fileIn2: 'W M4.5 8.5v-7h9l5 4v4;g M13.5 1.5v4h5;G M1.5 8.5h18v10h-18z;m M2 10h16v8h-16z;k M6 6.5h4;g M4.5 8v11',
  relate: 'W M9.5 1.5h10v7h-10z;M M9 1h11v2h-11z;W M1.5 8.5h7v10h-7z;M M3 11h2v2h-2zM3 15h2v2h-2zM6 13h2v2h-2z;K M18 11v5h-4',
  dots: 'W M1.5 1.5h17v17h-17z;M M4 12h2v5h-2zM7 8h2v3h-2zM7 12h2v5h-2zM10 5h2v3h-2zM10 10h2v7h-2zM13 12h2v5h-2zM13 8h2v2h-2z',
  photo: `${photo};Q o15 5 1`,
  dotsEdit: 'W M1.5 1.5h17v17h-17z;M M7 4h2v2h-2zM11 4h2v2h-2zM15 4h2v2h-2zM11 8h2v2h-2zM15 8h2v2h-2zM11 13h2v2h-2zM15 13h2v2h-2z;o M2 9l6 6;P M7 14l3 3-4-1z',
  photoClip: `${photo};b M7.5 0v13h13M16.5 0v17M4 3.5h16`,
  globe: 'c o10 9 8;A M4 4c4-4 7-1 6 2s-4 4-6 3zM11 8c4-2 6 0 5 4s-4 3-5 0z;m M2 17h6v2h-6z;l o5 17 2.5 10 17 2.5 15 17 2.5',
  chart: 'm M1 10h4v9h-4z;c M1 10h2v9h-2z;j M7 1h5v18h-5z;f M14 7h5v12h-5z',
  clipBox: `${box};G M5.5 10.5v-9h4v9h-3v-7`,
  badge: 'W M1.5 6.5h18v12h-18z;G M8.5 1.5h5v6h-5z;N o6 12 2;N M2 18c0-5 8-5 8 0z',
  clipCard: 'W M1.5 8.5h18v10h-18z;G M6.5 10.5h8v6h-8z;G M8.5 1.5h4v8h-4z;g M12.5 3.5l4 5',
  hatchEdit: `m M2 2h16v15h-16z;g M0 1.5h20M0 17.5h20M1.5 0v20M18.5 0v20;${pencil}`,
  eraseArc: 'g M8 16h8c5-1 3-7-4-7;o M4 12l7-7;P M2 15l1-4 3 2z',
  curveEdit: 'g M17 2H8c-7 0-7 7 0 7h4M7 18h7c6 0 6-7-1-8;o M4 15l6-7;P M2 18l1-4 3 2z',
  pdfIn: `${pdf};V M0 14h9;U M13 14l-5-4v8z`,
  pdfEdit: `${pdf};o M2 11l6 6;P M7 15l4 4-5-1z`,
  pdfCut: `${pdf};k M2 10l8 8M10 10l-8 8`,
  pdfOut: 'W M2.5 10v-8.5h10l5 4v13h-3;V M8 8h7;U M19 8l-5-3v6z;U M0 11h15v8h-15z;t 7.5 18 7 #ffffff PDF',
  card,
  cardDel: `${cardShort};R M14 13l5 5M19 13l-5 5`,
  cardEdit: `${cardShort};${pencil}`,
  cardProp: `${cardShort};G M12.5 9.5h7v10h-7z;U M14 11h4v4h-4z`,
  printFile: 'W M4.5 8.5v-7h9l5 4v4;g M13.5 1.5v4h5;G M.5 10.5h19v9h-19z;M M1 14h18v3h-18z;k M6 6.5h4',
  sheets: 'J M.5 4.5l8-3 4 14-8 2z;H M7.5 5.5h8l4 4v10h-12z;W M15.5 5.5v4h4z',

  // dock tabs and object states
  dockProp: 'G M1.5 .5h17v19h-17z;N M4 3h11v7h-11z;U M6 4h7v5h-7z;k M5 13.5h10M5 16.5h6M13.5 12v3',
  dockLib: `z M0 0h20v20h-20z;${part};${hammer};k M2 9v-4h4`,
  dockCenter: 'G M.5 .5h19v19h-19z;k M1.5 1.5h17v17h-17zM6.5 1v18M9.5 4.5h3v3h-3zM14.5 4.5h3v3h-3zM9.5 11.500h3v3h-3zM14.500 11.500h3v3h-3zM2 5.5h3M2 9.5h3M2 13.5h3',
  bulb: 'Y M7.5 13.5c0-3-3-3-3-7 0-7 11-7 11 0 0 4-3 4-3 7z;G M7.5 13.5h5v5h-5z;g M7 16h6',
  sun: 'Y o10 10 6;q M10 1v2M10 17v2M1 10h2M17 10h2M4 4l1 1M15 15l1 1M4 16l1-1M15 5l1-1',
  lock: 'Y M3.5 8.5h11v10h-11z;z M4 9h10v9h-10z;N M8 12h2v4h-2z;q M9.500 8v-4c0-3 7-3 7 0v3',
  printer: 'W M4.5 1.5h11v6h-11z;G M.5 6.5h19v8h-19z;M M2 11h16v3h-16z;W M4.5 13.5h11v5h-11z',
};

function Icon({ name }: { name: string }) {
  return (
    <svg viewBox="0 0 20 20" className="size-5 shrink-0 overflow-visible" aria-hidden="true">
      {glyphs[name].split(';').map((layer, i) => {
        const [pen, ...rest] = layer.trim().split(' ');
        if (pen === 't') {
          const [x, y, size, color, ...label] = rest;
          return (
            <text key={i} x={x} y={y} fontSize={size} fill={color} textAnchor="middle" fontWeight="700">
              {label.join(' ')}
            </text>
          );
        }
        const p = pens[pen];
        const style = {
          stroke: p.stroke ?? 'none',
          fill: p.fill ?? 'none',
          strokeWidth: p.width ?? 1,
          strokeDasharray: p.dash,
        };
        const data = rest.join(' ');
        if (data[0] !== 'o') return <path key={i} d={data} {...style} />;
        const n = data.slice(1).split(' ').map(Number);
        return (
          <Fragment key={i}>
            {Array.from({ length: n.length / 3 }, (_, c) => (
              <circle key={c} cx={n[c * 3]} cy={n[c * 3 + 1]} r={n[c * 3 + 2]} {...style} />
            ))}
          </Fragment>
        );
      })}
    </svg>
  );
}

function Caret({ light }: { light?: boolean }) {
  return (
    <svg viewBox="0 0 7 5" className={clsx('w-[7px] h-[5px] shrink-0 pointer-events-none', light ? 'fill-gray-300' : 'fill-[#666]')}>
      <path d="M0 0h7L3.500 5z" />
    </svg>
  );
}

// "|" is a divider, ":" a grip, "=label" a text button
function Tools({ items, vertical }: { items: string; vertical?: boolean }) {
  return (
    <>
      {items.split(/\s+/).map((item, i) => {
        if (item === '|') {
          return vertical ? (
            <div key={i} className="h-[10px] w-full flex items-center shrink-0">
              <div className="h-px w-full bg-[#c8c8c8]" />
            </div>
          ) : (
            <div key={i} className="w-[10px] h-[26px] flex justify-center shrink-0">
              <div className="w-px h-full bg-[#c8c8c8]" />
            </div>
          );
        }
        if (item === ':') {
          return vertical ? (
            <div key={i} className="h-3 flex items-center shrink-0">
              <div className="w-[18px] border-t-2 border-dotted border-[#aaa]" />
            </div>
          ) : (
            <div key={i} className="w-3 flex justify-center shrink-0">
              <div className="h-[18px] border-l-2 border-dotted border-[#aaa]" />
            </div>
          );
        }
        if (item[0] === '=') {
          return (
            <button
              key={i}
              className={clsx(
                'shrink-0 whitespace-nowrap',
                vertical ? '[writing-mode:vertical-rl] [text-orientation:sideways] pt-2 pb-1 w-5 leading-5' : 'px-2',
              )}
            >
              {item.slice(1)}
            </button>
          );
        }
        return (
          <button
            key={i}
            aria-label={item}
            className={clsx('flex items-center justify-center shrink-0', vertical ? 'w-7 h-7' : 'w-[33px] h-7')}
          >
            <Icon name={item} />
          </button>
        );
      })}
    </>
  );
}

function Combo({ label, value, className, children }: { label: string; value: string; className: string; children?: ReactNode }) {
  return (
    <div className={clsx('h-6 mx-[6px] flex items-center shrink-0 border border-[#c6c6c6] rounded-md bg-[#f7f7f7]', className)}>
      {children}
      <select aria-label={label} defaultValue={value} className="appearance-none bg-transparent outline-none flex-1 min-w-0 h-full leading-5">
        <option>{value}</option>
      </select>
      <Caret />
    </div>
  );
}

const menus = ['文件(F)', '编辑(E)', '视图(V)', '格式(O)', '幅面(P)', '绘图(D)', '标注(N)', '修改(M)', '工具(T)', '窗口(W)', '帮助(H)'];

const leftColumns = [
  {
    className: 'w-[33px] pt-[60px]',
    items: ': ln lnThin lnAng lnFan lnCross lnTri lnEnd lnMid : cCtr cRad c2p c3p cTan : elli elliArc : arc1 arc2 arc3 arc4 arc5 arc6 arc6 : center nodes plusC',
  },
  {
    className: 'w-[38px] pt-[60px]',
    items: ': line dbl circle arc spline point ellipse rect penta pline cloud donut axis contour curve hatch region grad lshape table text | insPic blockIns : textA abcArc abcLine',
  },
  {
    className: 'w-[37px] pt-[5px]',
    items: ': erase eraseAll move copyObj rotate mirror array scale stretch trim extend draft break cone explode node align dimEdit dimRuler dimBreak propBrush =换风格 =重关联 =对齐 =查找替换',
  },
];

const rightColumns = [
  {
    className: 'pt-[30px]',
    items: ': part1 part2 part3 part4 part5 | bolts nut screw pin bushing rings spring structure tube | mural : mDist mCoord mTri mArea mPoly mCircle mAdd mLoop mSheet scroll report',
  },
  {
    className: 'pt-[39px]',
    items: ': dim dimAuto =两点标注 dimBase dimCont dimAngle dimArc dimOrd dimJog dimDot dimTaper dimSpline dimLin dimAli dimDia dimRad dimAng2 dimArc2 | axOrigin axCube axPencil ordX ordY ordXY xy xyTarget',
  },
  {
    className: 'pt-[60px]',
    items: ': bal12 balErase bal2 balSwap balAdd balUp balOff balOn balPlus balLink : magnet | dimBrush styleA leadBrush tblBrush bookEdit aaBrush =隔离 =隐藏 =结束隔离 : pinDim pinDimX pinCalc',
  },
  {
    className: 'pt-[60px]',
    items: ': tText tRow tDel tMerge tCalc tSheet : blk blkCopy blkDash tag blkSync blkFast blkClip wrap sheetFast attrIns attrMove tagEdit tagEx tagOut tagIn : scAdd scSub scDel scSave',
  },
  {
    className: 'pt-[53px]',
    items: ': qr barcode fileIn fileIn2 relate dots photo dotsEdit photoClip globe chart clipBox badge clipCard hatchEdit eraseArc curveEdit pdfIn pdfEdit pdfCut pdfOut : card cardDel cardEdit cardProp printFile sheets',
  },
];

const dockTabs = [
  { icon: 'dockProp', label: '特性', className: 'h-[52px]' },
  { icon: 'dockLib', label: '图库', className: 'h-[52px]' },
  { icon: 'dockCenter', label: '设计中心', className: 'h-[82px]' },
];

const bindingRows = [
  203, 235, 255, 272, 306, 337, 357, 374, 408, 440, 460, 475, 509, 542, 562, 578, 611, 645, 665, 680, 697, 717, 743, 756, 769, 782,
  794, 807, 820, 833, 846, 859, 872, 884,
];

type Label = [x: number, y: number, text: string];

const partsHead: { size: number; labels: Label[] }[] = [
  { size: 11, labels: [[817, 713, '3'], [817, 731, '2'], [817, 749, '1']] },
  { size: 10, labels: [[818, 776, '序号'], [993, 776, '数量']] },
  { size: 13, labels: [[872, 776, '代号'], [949, 776, '名称'], [1023, 776, '材料'], [1180, 776, '备注']] },
  { size: 9, labels: [[1054, 766, '单件'], [1077, 766, '总计'], [1067, 785, '重量']] },
];

const titleLabels: Label[] = [
  [818, 826, '标记'], [837, 826, '处数'], [872, 826, '更改文件号'], [911, 826, '签'], [923, 826, '字'], [949, 826, '日期'],
  [819, 839, '设'], [835, 839, '计'], [904, 839, '标准化'],
  [819, 852, '校'], [835, 852, '对'], [897, 852, '审'], [912, 852, '定'],
  [819, 865, '审'], [835, 865, '核'], [897, 865, '批'], [912, 865, '准'],
  [819, 877, '工'], [835, 877, '艺'], [896, 877, '日'], [911, 877, '期'],
  [975, 846, '代'], [987, 846, '号'], [1014, 846, '材'], [1026, 846, '料'],
  [1053, 846, '数'], [1065, 846, '量'], [1091, 846, '比'], [1103, 846, '例'],
  [987, 876, '共'], [1015, 876, '页'], [1064, 876, '第'], [1092, 876, '页'],
];

const bindingLabels: Label[] = [
  [217, 724, '借'], [235, 724, '(通)'], [253, 724, '用'],
  [217, 735, '件'], [235, 735, '登'], [253, 735, '记'],
  [236, 762, '旧底图总号'],
  [219, 787, '底'], [230, 787, '图'], [240, 787, '总'], [251, 787, '号'],
  [224, 813, '签'], [246, 813, '字'],
  [224, 839, '日'], [246, 839, '期'],
  [219, 864, '档案员'], [252, 864, '日期'],
];

function Labels({ labels, size, color }: { labels: Label[]; size: number; color: string }) {
  return (
    <g fill={color} fontSize={size} textAnchor="middle" dominantBaseline="central">
      {labels.map(([x, y, text]) => (
        <text key={`${x}-${y}`} x={x} y={y}>{text}</text>
      ))}
    </g>
  );
}

function Drawing() {
  const leaders = [
    { n: 1, x: 396, y: 542, ex: 316, ey: 607 },
    { n: 2, x: 540, y: 542, ex: 468, ey: 587 },
    { n: 3, x: 672, y: 542, ex: 594, ey: 602 },
  ];
  return (
    <svg viewBox="145 110 1588 787" preserveAspectRatio="xMinYMin slice" className="w-full h-full block" fill="none">
      <defs>
        <clipPath id="hatch-area">
          <path d="M693 361h201v112h-201z" />
        </clipPath>
      </defs>

      {/* Sheet edge and frame */}
      <path d="M203.500 897V134.500H1283.500V897" stroke="#a8a8a8" />
      <g stroke="#a8a8a8">
        {bindingRows.map((y) => <path key={y} d={`M203 ${y}.5H267`} />)}
        <path d="M235.500 859.500V884" />
      </g>
      <path d="M267 147H1270V884H267z" stroke="#fff" strokeWidth="2" />

      {/* Hatched block */}
      <g clipPath="url(#hatch-area)" stroke="#00ffff">
        {Array.from({ length: 29 }, (_, i) => <path key={i} d={`M692 ${364 + i * 11}l320-320`} />)}
      </g>
      <path d="M693 361H894V473H693z" stroke="#fff" strokeWidth="2" />

      {/* UCS mark */}
      <path d="M743.500 480V516.500H780M737 491l6.500-11 6.500 11M769 510l11 6.500-11 6.500" stroke="#ff00ff" />

      {/* Balloons */}
      {leaders.map(({ n, x, y, ex, ey }) => (
        <g key={n}>
          <path d={`M${ex} ${ey}L${x} ${y}.5h27`} stroke="#b0b0b0" />
          <path d={`M${ex - 1} ${ey - 1}h3v3h-3z`} fill="#b0b0b0" />
          <text x={x + 13} y={y - 5} fontSize="14" fill="#b0b0b0" textAnchor="middle">{n}</text>
        </g>
      ))}

      {/* Parts list */}
      <path d="M807 704.500H1270M807 722.500H1270M807 740.500H1270" stroke="#b0b0b0" />
      <path
        d="M806 758H1271M806 794H1271M807 704V794M828 704V794M918 704V794M982 704V794M1003 704V794M1044 704V794M1064 704V776M1090 704V794M1044 776H1090M1270 704V794"
        stroke="#b0b0b0"
        strokeWidth="2"
      />
      {partsHead.map(({ size, labels }) => <Labels key={size} labels={labels} size={size} color="#b0b0b0" />)}

      {/* Title block */}
      <path d="M807 795V884" stroke="#fff" strokeWidth="2" />
      <path
        d="M808 807.500H962M808 820.500H962M808 833.500H962M808 846.500H962M808 859.500H962M808 872.500H962M828.500 795V833M846.500 795V884M897.500 795V833M936.500 795V833M962.500 795V884M884.500 833V884M923.500 833V884M962 839.500H1116M962 855.500H1270M962 869.500H1116M1116.500 795V884M1000.500 839V869M1039.500 839V884M1077.500 839V869M1116 825.500H1270"
        stroke="#00ffff"
      />
      <Labels labels={titleLabels} size={9} color="#00ffff" />
      <path d="M1093.500 859v7M1101.500 859v7" stroke="#ff8c1a" />
      <Labels labels={bindingLabels} size={7} color="#00ff00" />

      {/* Crosshair */}
      <path d="M145 113.500H1733M222.500 110V897" stroke="#00ffff" />
      <path d="M213.500 110V122.500H231.500V110" stroke="#00e08a" />
    </svg>
  );
}

function DockTabs() {
  return (
    <div className="w-[37px] pt-[3px] flex flex-col gap-[6px]">
      {dockTabs.map((tab) => (
        <div key={tab.label} className={clsx('flex pl-px shrink-0', tab.className)}>
          <div className="w-[6px] bg-[#c8c8c8]" />
          <button className="flex-1 flex flex-col items-center">
            <Icon name={tab.icon} />
            <span className="[writing-mode:vertical-rl] [text-orientation:sideways] leading-5 pt-[2px]">{tab.label}</span>
          </button>
        </div>
      ))}
    </div>
  );
}

function DocumentTabs() {
  return (
    <div className="h-[27px] flex items-end border-b border-[#b4b4b4] shrink-0">
      <div className="relative w-[169px] h-[25px]">
        <svg viewBox="0 0 169 25" className="absolute inset-0 w-full h-full">
          <path d="M.5 25L25.500 .5H168.500V25" fill="#fafafa" stroke="#b4b4b4" />
        </svg>
        <div className="relative h-full flex items-center pl-11">
          <button className="font-medium text-[#333]">工程图文档1*</button>
          <button aria-label="关闭" className="ml-4">
            <svg viewBox="0 0 10 10" className="size-[10px]" stroke="#666" strokeWidth="2"><path d="M1 1l8 8M9 1l-8 8" /></svg>
          </button>
        </div>
      </div>
      <button aria-label="新建文档" className="w-[34px] h-[25px] border border-l-0 border-b-0 border-[#b4b4b4] rounded-t flex items-center justify-center">
        <svg viewBox="0 0 16 16" className="size-4" stroke="#444" strokeWidth="3"><path d="M8 0v16M0 8h16" /></svg>
      </button>
      <button aria-label="文档列表" className="ml-auto mr-2 h-full flex items-center">
        <svg viewBox="0 0 11 7" className="w-[11px] h-[7px]" fill="#666"><path d="M0 0h11L5.500 7z" /></svg>
      </button>
    </div>
  );
}

function LayoutTabs() {
  const arrows = [
    { label: '首页', d: 'M2.500 1v10M10 2L5 6l5 4z' },
    { label: '上一页', d: 'M8 2L3 6l5 4z' },
    { label: '下一页', d: 'M4 2l5 4-5 4z' },
    { label: '末页', d: 'M9.500 1v10M2 2l5 4-5 4z' },
  ];
  return (
    <div className="h-[22px] flex items-start border-t border-[#888] shrink-0">
      {arrows.map((a) => (
        <button key={a.label} aria-label={a.label} className="w-[23px] h-5 pr-1 flex items-center justify-center">
          <svg viewBox="0 0 12 12" className="size-3" fill="#666" stroke="#777"><path d={a.d} /></svg>
        </button>
      ))}
      <button className="relative w-[55px] h-[21px] leading-[18px] text-[#333]">
        <svg viewBox="0 0 55 21" className="absolute inset-0" fill="#fff" stroke="#a8a8a8"><path d="M.5 0L10.500 20.500H45L54.500 0" /></svg>
        <span className="relative block h-[21px]">模型</span>
      </button>
      {['A3', 'A4'].map((name) => (
        <button key={name} className="relative -ml-1 w-10 h-[21px] pr-1 leading-[18px]">
          <svg viewBox="0 0 40 21" className="absolute inset-0" fill="none" stroke="#a8a8a8"><path d="M0 10L5.500 20.500H30L39.500 0" /></svg>
          <span className="relative block h-[21px]">{name}</span>
        </button>
      ))}
    </div>
  );
}

export default function App() {
  return (
    <div className="min-h-screen flex flex-col overflow-hidden bg-[#f5f5f5] text-[#444] text-[15px] leading-5 font-['Noto_Sans','Noto_Sans_CJK_SC',sans-serif]">
      {/* Menu */}
      <header className="h-[18px] flex items-end overflow-hidden shrink-0">
        <div className="w-[41px] h-full pl-[10px] shrink-0">
          <svg viewBox="0 0 18 14" className="w-[18px] h-[14px]">
            <path d="M0 0l4 1-2 4 3 1-4 7 5-4 2-4-3-3 4-2z" fill="#1450c8" />
            <path d="M3 12l6-8 5-2-3 5z" fill="#1da1e8" />
            <circle cx="9" cy="4" r="3.500" fill="#e8f4ff" stroke="#1463d8" strokeWidth="2" />
            <path d="M12 3l4-1-2 4 4 5-6-4z" fill="#1450c8" />
          </svg>
        </div>
        <nav className="flex gap-[21px] pb-[5px]">
          {menus.map((m) => <button key={m} className="whitespace-nowrap">{m}</button>)}
        </nav>
        <div className="ml-auto pr-1 h-full flex items-center gap-[10px]">
          <button aria-label="最小化"><svg viewBox="0 0 12 12" className="size-3" fill="#555"><path d="M2 8h8v2h-8z" /></svg></button>
          <button aria-label="还原">
            <svg viewBox="0 0 12 12" className="size-3" fill="none" stroke="#555"><path d="M3.500 4V1.500h7v6h-2M3 2h8M1.500 4.500h7v6h-7zM1 5.500h8" /></svg>
          </button>
          <button aria-label="关闭窗口"><svg viewBox="0 0 12 12" className="size-3" stroke="#555" strokeWidth="2"><path d="M2 2l8 8M10 2l-8 8" /></svg></button>
        </div>
      </header>

      {/* Standard bar */}
      <div className="h-[34px] flex items-center shrink-0">
        <div className="w-[7px] flex justify-center shrink-0"><div className="h-[18px] border-l-2 border-dotted border-[#aaa]" /></div>
        <Tools items="new open save | saveAs | print | copy paste pasteZoom pasteBlock pasteXY | undo" />
        <button aria-label="撤销列表" className="w-4 h-7"><Caret /></button>
        <Tools items="redo" />
        <button aria-label="重做列表" className="w-4 h-7"><Caret light /></button>
        <Tools items="| clean | =选项... =置顶 =置底 front =置前 =置后 :" />
        <Combo label="图层" value="粗实线层" className="w-[187px] pl-[2px] pr-[6px]">
          <Icon name="bulb" />
          <Icon name="sun" />
          <Icon name="lock" />
          <Icon name="printer" />
          <div className="size-3 ml-[3px] mr-[3px] border border-black bg-white shrink-0" />
        </Combo>
        <Tools items="layerMgr" />
        <Combo label="颜色" value="ByLayer" className="w-[113px] pl-2 pr-[6px]">
          <div className="size-[15px] mr-2 border border-black bg-white shrink-0" />
        </Combo>
        <Tools items="wheel" />
        <Combo label="线型" value="ByLayer" className="w-[138px] pl-[6px] pr-[6px]">
          <div className="w-[46px] h-px mr-[2px] bg-red-500 shrink-0" />
        </Combo>
        <Tools items="linetype" />
        <Combo label="线宽" value="ByLayer" className="w-[137px] pl-2 pr-[6px]">
          <div className="w-[38px] h-1 mr-3 bg-[#444] shrink-0" />
        </Combo>
        <Tools items="lineweight : cnrBox cnrArc cnrArcX chamfer chamferX shaft hole cnrLine" />
      </div>

      {/* Drawing bar */}
      <div className="h-[31px] pb-[2px] flex items-center shrink-0">
        <div className="w-[7px] flex justify-center shrink-0"><div className="h-[18px] border-l-2 border-dotted border-[#aaa]" /></div>
        <Tools items="frame frameAdd frameSwap frameView num tableT : wave zigzag gable arrow gear cam coupling : dim dimFast coord | leaderR leaderA rough datum tol weld section viewDir cutView textLine textPart textTri targets quad textArc slope zoom :" />
        <Combo label="文字样式" value="标准" className="w-[88px] pl-[2px] pr-[6px]" />
        <Tools items="styleA" />
        <Combo label="标注样式" value="标准" className="w-[88px] pl-[2px] pr-[6px]" />
        <Tools items="dimBrush : filter layProp layOk layPick layGear layTop | layDown layUp | layMove layDel | layBulb laySplit" />
      </div>

      {/* Workspace */}
      <div className="flex-1 flex">
        <aside className="flex w-[145px] shrink-0">
          {leftColumns.map((col) => (
            <div key={col.items} className={clsx('flex flex-col items-center shrink-0', col.className)}>
              <Tools vertical items={col.items} />
            </div>
          ))}
          <DockTabs />
        </aside>

        <main className="flex-1 min-w-0 flex flex-col">
          <DocumentTabs />
          <div className="flex-1 basis-0 min-h-0 bg-black overflow-hidden">
            <Drawing />
          </div>
          <LayoutTabs />
        </main>

        <aside className="w-[183px] shrink-0 grid grid-cols-5">
          {rightColumns.map((col) => (
            <div key={col.items} className={clsx('flex flex-col items-center', col.className)}>
              <Tools vertical items={col.items} />
            </div>
          ))}
        </aside>
      </div>

      <div className="h-[31px] pl-[2px] pt-[5px] shrink-0">
        <div className="h-[18px] border-l-2 border-dotted border-[#aaa]" />
      </div>

      {/* Status bar */}
      <footer className="h-[30px] pb-[2px] border-t border-[#ccc] flex items-center shrink-0 whitespace-nowrap">
        <label htmlFor="command" className="pl-[7px]">命令:</label>
        <input id="command" className="flex-1 min-w-0 bg-transparent outline-none px-1" />
        <span className="w-[130px]">空命令</span>
        <span className="w-[270px] text-base leading-5">X:-202.807, Y:156.723</span>
        <span className="w-[121px]">屏幕点</span>
        <button className="px-[9px]">正交</button>
        <button className="px-[9px] h-[26px] bg-[#a8a8a8]">线宽</button>
        <button className="px-[9px]">动态输入</button>
        <button className="pl-[9px] pr-[3px] flex items-center gap-[7px]">
          智能
          <svg viewBox="0 0 8 8" className="size-2" fill="none" stroke="#444"><path d="M1 2l3 4 3-4" /></svg>
        </button>
      </footer>
      <div className="h-[9px] border-t border-[#a9b1b8] shrink-0 bg-linear-to-r from-[#d4e3f3] from-75% via-[#ecd8de] via-79% to-[#d5dbea] to-84%" />
    </div>
  );
}
